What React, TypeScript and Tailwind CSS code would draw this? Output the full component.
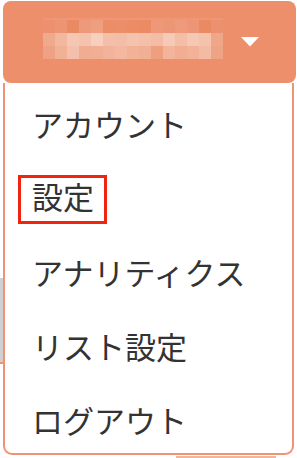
import React from "react";

const mosaic: string[][] = [
  ["bg-[#ec9070]", "bg-[#ed9473]", "bg-[#e98a62]", "bg-[#ee9a7a]", "bg-[#ef9f80]", "bg-[#eb8e68]", "bg-[#ec8f69]", "bg-[#eb8c66]", "bg-[#ea8b64]", "bg-[#ee9879]", "bg-[#ed9676]", "bg-[#ee9a7b]", "bg-[#ed9574]", "bg-[#ea8a62]", "bg-[#ec9170]"],
  ["bg-[#efa98d]", "bg-[#f2b79f]", "bg-[#f5c6b2]", "bg-[#f4c2ad]", "bg-[#f7cfbd]", "bg-[#f3bfa9]", "bg-[#f3bea8]", "bg-[#f4c3ae]", "bg-[#f4c0aa]", "bg-[#f3bca5]", "bg-[#f6cab7]", "bg-[#f3bda6]", "bg-[#f5c8b4]", "bg-[#f4c2ad]", "bg-[#efa78a]"],
  ["bg-[#eea184]", "bg-[#f1b195]", "bg-[#f4c0ab]", "bg-[#f1ad91]", "bg-[#f1ae92]", "bg-[#f2b39a]", "bg-[#f3b89f]", "bg-[#f2b298]", "bg-[#f1af94]", "bg-[#ee9f80]", "bg-[#f2b59c]", "bg-[#f1ae93]", "bg-[#f2b298]", "bg-[#f3bba4]", "bg-[#eea385]"],
];

const items = ["アカウント", "設定", "アナリティクス", "リスト設定", "ログアウト"];

export default function App() {
  return (
    <div
      className="relative w-[297px] h-[458px] bg-white overflow-hidden pl-[3px] pt-[1px]"
      style={{ fontFamily: '"Noto Sans CJK JP", "Noto Sans", sans-serif' }}
    >
      {/* background bits peeking out behind the menu */}
      <div className="absolute left-0 top-[278px] w-[3px] h-[84px] bg-[#d0d0d0]" />
      <div className="absolute left-0 top-[362px] w-[3px] h-[2px] bg-[#ee9474]" />
      <div className="absolute left-[176px] top-[456px] w-[100px] h-[2px] bg-[#f2b49b]" />

      <div className="relative w-[293px] flex flex-col">
        {/* header */}
        <div className="h-[82px] rounded-[8px] bg-[#ec8f6a] flex items-start justify-between pl-[40px] pr-[37px]">
          <div className="mt-[17px] flex flex-col">
            <div className="h-[2px] bg-[#f09674]" />
            {mosaic.map((row, i) => (
              <div key={i} className="flex">
                {row.map((c, j) => (
                  <div key={j} className={`w-[12px] h-[13px] ${c}`} />
                ))}
              </div>
            ))}
          </div>
          <svg className="mt-[36px]" width="18" height="10" viewBox="0 0 18 10">
            <polygon points="0,0 18,0 9,9.5" fill="#ffffff" />
          </svg>
        </div>

        {/* menu */}
        <div className="w-[291px] h-[372px] border-2 border-t-0 border-[#ee9474] rounded-b-[9px] bg-white overflow-hidden pt-[3px] flex flex-col">
          {items.map((t, i) =>
            i === 1 ? (
              <div key={i} className="h-[74px] shrink-0 flex items-center pl-[13px] pt-[4px]">
                <div className="w-[89px] h-[49px] border-[3px] border-[#f0250f] flex items-center pl-[11px] pb-[7px] text-[31px] leading-none text-[#333333]">
                  {t}
                </div>
              </div>
            ) : (
              <div
                key={i}
                className="h-[74px] shrink-0 flex items-center pl-[27px] text-[31px] leading-none text-[#333333]"
              >
                {t}
              </div>
            )
          )}
        </div>
      </div>
    </div>
  );
}
